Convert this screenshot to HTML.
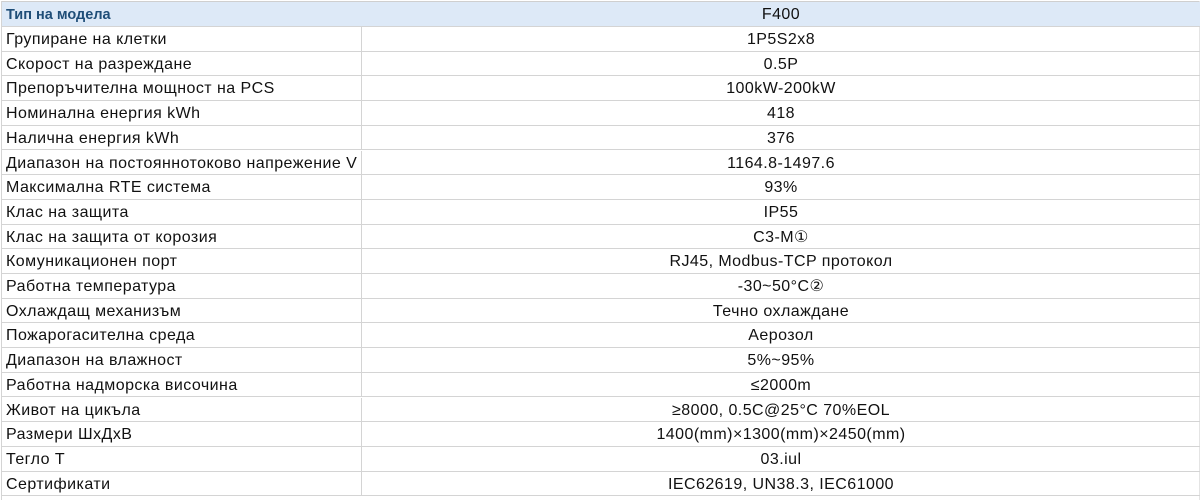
<!DOCTYPE html>
<html><head><meta charset="utf-8"><style>
html,body{margin:0;padding:0;background:#fff;width:1203px;height:500px;overflow:hidden;font-family:"Liberation Sans",sans-serif;}
.r{position:absolute;left:2px;width:1198px;height:24.7px;border-bottom:1px solid #d4d4d4;box-sizing:border-box;font-size:16px;letter-spacing:0.45px;color:#111;line-height:18px;}
.r .a{position:absolute;left:4px;top:4px;white-space:nowrap;}
.r .b{position:absolute;left:360px;right:0;top:4px;text-align:center;white-space:nowrap;}
.r .d{position:absolute;left:359px;top:0;bottom:-1px;width:1px;background:#d4d4d4;}
.h{background:#dde9f7;}
.h .a{color:#1f4e78;font-weight:bold;font-size:14.5px;letter-spacing:0;top:4px;}
.L{position:absolute;left:1px;top:1px;width:1px;height:499px;background:#d4d4d4;}
.R{position:absolute;left:1199px;top:1px;width:1px;height:499px;background:#e4e4e4;}
.T{position:absolute;left:1px;top:1px;width:1199px;height:1px;background:#cfcfcf;}
.c{font-family:"Liberation Sans",sans-serif;}
</style></head><body>
<div class="T"></div><div class="L"></div><div class="R"></div>
<div class="r h" style="top:2px;height:25px"><span class="a">Тип на модела</span><span class="b">F400</span></div>
<div class="r" style="top:27px"><i class="d"></i><span class="a">Групиране на клетки</span><span class="b">1P5S2x8</span></div>
<div class="r" style="top:51.7px"><i class="d"></i><span class="a">Скорост на разреждане</span><span class="b">0.5P</span></div>
<div class="r" style="top:76.4px"><i class="d"></i><span class="a">Препоръчителна мощност на PCS</span><span class="b">100kW-200kW</span></div>
<div class="r" style="top:101.1px"><i class="d"></i><span class="a">Номинална енергия kWh</span><span class="b">418</span></div>
<div class="r" style="top:125.8px"><i class="d"></i><span class="a">Налична енергия kWh</span><span class="b">376</span></div>
<div class="r" style="top:150.5px"><i class="d"></i><span class="a">Диапазон на постояннотоково напрежение V</span><span class="b">1164.8-1497.6</span></div>
<div class="r" style="top:175.2px"><i class="d"></i><span class="a">Максимална RTE система</span><span class="b">93%</span></div>
<div class="r" style="top:199.9px"><i class="d"></i><span class="a">Клас на защита</span><span class="b">IP55</span></div>
<div class="r" style="top:224.6px"><i class="d"></i><span class="a">Клас на защита от корозия</span><span class="b">C3-M①</span></div>
<div class="r" style="top:249.3px"><i class="d"></i><span class="a">Комуникационен порт</span><span class="b">RJ45, Modbus-TCP протокол</span></div>
<div class="r" style="top:274px"><i class="d"></i><span class="a">Работна температура</span><span class="b">-30~50°C②</span></div>
<div class="r" style="top:298.7px"><i class="d"></i><span class="a">Охлаждащ механизъм</span><span class="b">Течно охлаждане</span></div>
<div class="r" style="top:323.4px"><i class="d"></i><span class="a">Пожарогасителна среда</span><span class="b">Аерозол</span></div>
<div class="r" style="top:348.1px"><i class="d"></i><span class="a">Диапазон на влажност</span><span class="b">5%~95%</span></div>
<div class="r" style="top:372.8px"><i class="d"></i><span class="a">Работна надморска височина</span><span class="b">≤2000m</span></div>
<div class="r" style="top:397.5px"><i class="d"></i><span class="a">Живот на цикъла</span><span class="b">≥8000, 0.5C@25°C 70%EOL</span></div>
<div class="r" style="top:422.2px"><i class="d"></i><span class="a">Размери ШхДхВ</span><span class="b">1400(mm)×1300(mm)×2450(mm)</span></div>
<div class="r" style="top:446.9px"><i class="d"></i><span class="a">Тегло T</span><span class="b">03.iul</span></div>
<div class="r" style="top:471.6px"><i class="d"></i><span class="a">Сертификати</span><span class="b">IEC62619, UN38.3, IEC61000</span></div>
</body></html>
